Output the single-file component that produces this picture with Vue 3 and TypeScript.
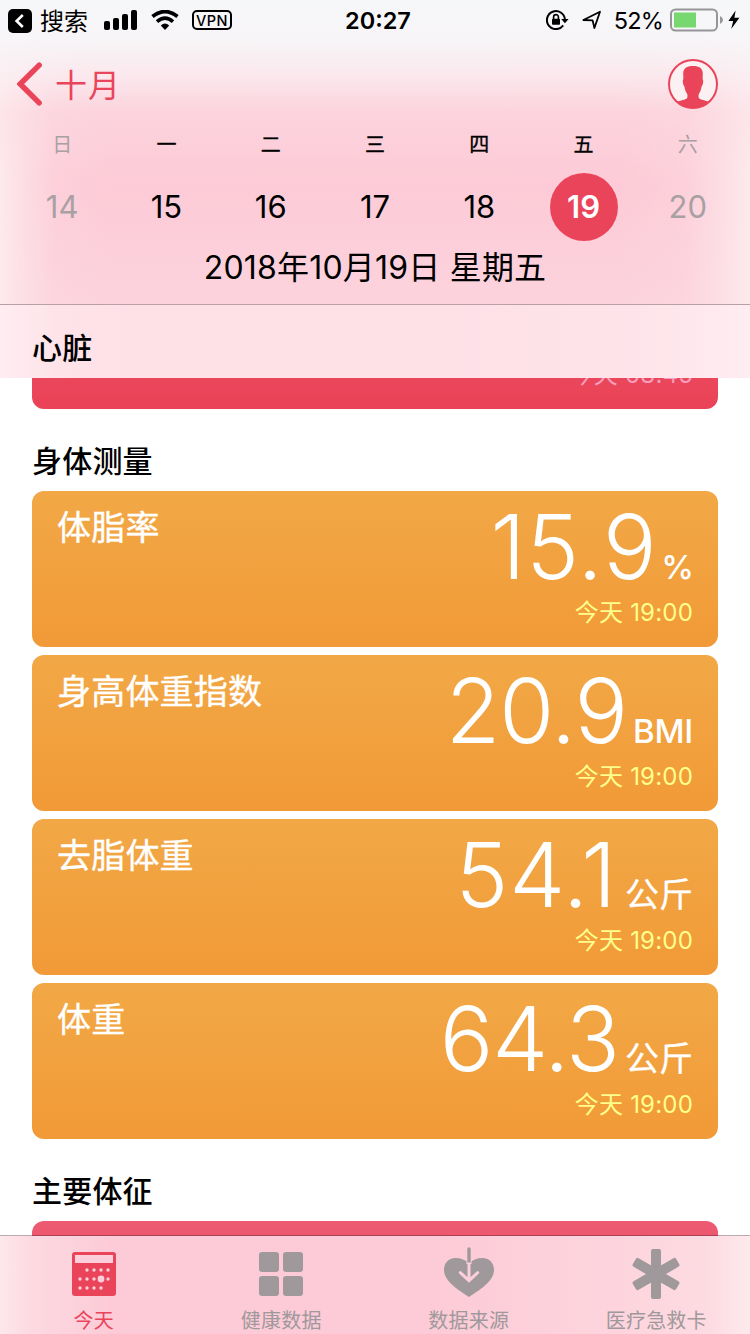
<script setup lang="ts">
interface Day {
  name: string
  date: number
  state: 'normal' | 'weekend' | 'active'
}

interface Metric {
  title: string
  value: string
  unit: string
  time: string
  kind: 'ratio' | 'latin' | 'cjk'
}

interface Tab {
  key: string
  label: string
}

const days: Day[] = [
  { name: '日', date: 14, state: 'weekend' },
  { name: '一', date: 15, state: 'normal' },
  { name: '二', date: 16, state: 'normal' },
  { name: '三', date: 17, state: 'normal' },
  { name: '四', date: 18, state: 'normal' },
  { name: '五', date: 19, state: 'active' },
  { name: '六', date: 20, state: 'weekend' },
]

const metrics: Metric[] = [
  { title: '体脂率', value: '15.9', unit: '%', time: '今天 19:00', kind: 'ratio' },
  { title: '身高体重指数', value: '20.9', unit: 'BMI', time: '今天 19:00', kind: 'latin' },
  { title: '去脂体重', value: '54.1', unit: '公斤', time: '今天 19:00', kind: 'cjk' },
  { title: '体重', value: '64.3', unit: '公斤', time: '今天 19:00', kind: 'cjk' },
]

const tabs: Tab[] = [
  { key: 'today', label: '今天' },
  { key: 'data', label: '健康数据' },
  { key: 'sources', label: '数据来源' },
  { key: 'medical', label: '医疗急救卡' },
]

const calendarDots: [number, number][] = [
  [15, 18], [22, 18], [29, 18], [36, 18],
  [8, 27], [15, 27], [22, 27], [36, 27],
  [8, 36], [15, 36], [22, 36], [29, 36],
]

// The digit 1 is much narrower than the others, so values with it get looser tracking.
const hasNarrowDigit = (value: string): boolean => value.includes('1')
</script>

<template>
  <div class="screen">
    <header class="header">
      <div class="status">
        <div class="status-left">
          <svg class="back-app" width="24" height="24" viewBox="0 0 24 24">
            <rect width="24" height="24" rx="5" fill="#000" />
            <path d="M14.8 6 L8.6 12 L14.8 18" fill="none" stroke="#fff" stroke-width="2.6" />
          </svg>
          <span class="back-label">搜索</span>
          <svg class="signal" width="34" height="20" viewBox="0 0 34 20">
            <rect x="0" y="11" width="6" height="9" rx="2" />
            <rect x="9" y="8" width="6" height="12" rx="2" />
            <rect x="18" y="4" width="6" height="16" rx="2" />
            <rect x="27" y="0" width="6" height="20" rx="2" />
          </svg>
          <svg class="wifi" width="28" height="20" viewBox="0 0 28 20">
            <path d="M1.5 6.6 Q14 -3.4 26.5 6.6" fill="none" stroke="#000" stroke-width="3.8" />
            <path d="M6 11.6 Q14 4.6 22 11.6" fill="none" stroke="#000" stroke-width="3.6" />
            <path d="M9.8 15.4 Q14 11.6 18.2 15.4 L14 20 Z" />
          </svg>
          <span class="vpn">VPN</span>
        </div>
        <span class="clock">20:27</span>
        <div class="status-right">
          <svg class="lock" width="23" height="20" viewBox="0 0 23 20">
            <path d="M17.2 15.4 A9 9 0 1 1 18.9 9.4" fill="none" stroke="#000" stroke-width="2" />
            <path d="M15.2 9 H22.6 L18.9 13.2 Z" />
            <rect x="6" y="8.8" width="8" height="6" rx="0.8" />
            <path d="M7.6 9 V7 A2.4 2.4 0 0 1 12.4 7 V9" fill="none" stroke="#000" stroke-width="1.6" />
          </svg>
          <svg class="location" width="20" height="20" viewBox="0 0 20 20">
            <path d="M1.4 10 L18 1.8 L12.4 18 L10.6 10.4 Z" fill="none" stroke="#000" stroke-width="1.8" stroke-linejoin="round" />
          </svg>
          <span class="charge">52%</span>
          <svg class="battery" width="54" height="24" viewBox="0 0 54 24">
            <rect x="1" y="1.500" width="46" height="21" rx="4.5" fill="none" stroke="#96969a" stroke-width="2" />
            <rect x="4" y="4.500" width="22" height="15" fill="#78d870" />
            <path d="M50 8.100 Q53 9.500 53 12 Q53 14.500 50 15.900 Z" fill="#96969a" />
          </svg>
          <svg class="bolt" width="12" height="20" viewBox="0 0 12 20">
            <path d="M7.6 0.5 L0.4 11 H5.2 L3.2 19 L11.4 7.8 H6.4 Z" />
          </svg>
        </div>
      </div>

      <div class="nav">
        <div class="nav-back">
          <svg width="26" height="44" viewBox="0 0 26 44">
            <path d="M22.2 3.2 L3.2 22 L22.2 40.8" fill="none" stroke="#ea445a" stroke-width="5.4" stroke-linecap="round" />
          </svg>
          <span>十月</span>
        </div>
        <svg class="avatar" width="50" height="50" viewBox="0 0 50 50">
          <circle cx="25" cy="25" r="24" fill="#fbf1f3" stroke="#ea445a" stroke-width="2" />
          <path
            d="M15.2 15 C15 9.5 18.5 7 25 7 C31.5 7 35 9.5 34.8 15 L34.6 20 C35.7 21 35.2 26 33.6 27.4 C33.2 31 31.6 33.5 30.6 35.5 V38.5 C31.5 40.8 35 40.6 40.5 42.5 L38 45 A24 24 0 0 1 12 45 L9.5 42.5 C15 40.6 18.5 40.8 19.4 38.5 V35.5 C18.4 33.5 16.8 31 16.4 27.4 C14.8 26 14.3 21 15.4 20 Z"
            fill="#ea445a"
          />
        </svg>
      </div>

      <div class="week">
        <div v-for="day in days" :key="day.date" class="day" :class="day.state">
          <span class="day-name">{{ day.name }}</span>
          <span class="day-date">{{ day.date }}</span>
        </div>
      </div>
      <div class="full-date">2018年10月19日 星期五</div>
    </header>

    <main class="content">
      <h2 class="section sticky">心脏</h2>
      <article class="card heart">
        <div class="reading">
          <span class="time">今天 08:45</span>
        </div>
      </article>

      <h2 class="section">身体测量</h2>
      <div class="cards">
        <article v-for="m in metrics" :key="m.title" class="card body">
          <h3 class="card-title">{{ m.title }}</h3>
          <div class="reading">
            <div class="amount">
              <span class="value" :class="{ loose: hasNarrowDigit(m.value) }">{{ m.value }}</span>
              <span class="unit" :class="m.kind">{{ m.unit }}</span>
            </div>
            <span class="time">{{ m.time }}</span>
          </div>
        </article>
      </div>

      <h2 class="section">主要体征</h2>
      <article class="card vitals"></article>
    </main>

    <nav class="tabbar">
      <div v-for="tab in tabs" :key="tab.key" class="tab" :class="{ selected: tab.key === 'today' }">
        <svg class="tab-icon" width="52" height="52" viewBox="0 0 52 52">
          <g v-if="tab.key === 'today'" transform="translate(4 5)">
            <rect width="44" height="44" rx="3" />
            <rect class="cut" x="3" y="3" width="38" height="8" />
            <circle v-for="([x, y], i) in calendarDots" :key="i" class="cut" :cx="x" :cy="y" r="1.7" />
            <circle class="cut" cx="29" cy="27" r="3.4" />
          </g>
          <g v-else-if="tab.key === 'data'" transform="translate(4 5)">
            <rect width="20" height="20" rx="3" />
            <rect x="24" width="20" height="20" rx="3" />
            <rect y="24" width="20" height="20" rx="3" />
            <rect x="24" y="24" width="20" height="20" rx="3" />
          </g>
          <g v-else-if="tab.key === 'sources'">
            <path d="M26 50 C21 46 1 36 1 23 C1 15 6.5 11 12.5 11 C18 11 22.5 13 26 16 C29.5 13 34 11 39.5 11 C45.5 11 51 15 51 23 C51 36 31 46 26 50 Z" />
            <path class="cut-line" d="M26 15 V33 M17.3 25.6 L26 33.7 L34.7 25.6" stroke-width="3" stroke-linecap="round" />
            <path class="cut-line" d="M26 12 V17" stroke-width="5" />
            <path d="M24.3 1.7 Q26 -1 27.7 1.7 V15.5 H24.3 Z" />
          </g>
          <g v-else>
            <rect x="21" y="2" width="10" height="50" rx="2" />
            <rect x="21" y="2" width="10" height="50" rx="2" transform="rotate(60 26 27)" />
            <rect x="21" y="2" width="10" height="50" rx="2" transform="rotate(-60 26 27)" />
          </g>
        </svg>
        <span class="tab-label">{{ tab.label }}</span>
      </div>
    </nav>
  </div>
</template>

<style>
body {
  margin: 0;
  background: #fff;
}
</style>

<style scoped>
.screen {
  display: flex;
  flex-direction: column;
  width: 750px;
  height: 1334px;
  overflow: hidden;
  background: #fff;
  color: #000;
  font-family: Inter, "Noto Sans CJK SC", sans-serif;
}

h2,
h3 {
  margin: 0;
}

svg {
  display: block;
  flex: none;
}

.header {
  flex: none;
  box-sizing: border-box;
  height: 305px;
  border-bottom: 1px solid #b9a0a6;
  background:
    linear-gradient(to bottom, #f6f7f9 0, rgba(247, 246, 248, 0.96) 40px, rgba(250, 240, 243, 0.78) 75px, rgba(253, 222, 229, 0.4) 112px, rgba(253, 214, 223, 0) 180px),
    linear-gradient(to right, #fdeaed 0, rgba(253, 228, 233, 0.8) 20px, rgba(253, 216, 224, 0.35) 55px, rgba(252, 208, 219, 0) 110px),
    linear-gradient(to left, #fdeaed 0, rgba(253, 228, 233, 0.8) 24px, rgba(253, 216, 224, 0.4) 65px, rgba(252, 208, 219, 0) 130px),
    linear-gradient(to bottom, #fccdd8 0, #fccbd7 190px, #fcd3dd 304px);
}

.status {
  display: grid;
  grid-template-columns: 1fr auto 1fr;
  align-items: center;
  height: 40px;
  padding: 0 10px 0 8px;
}

.status-left,
.status-right {
  display: flex;
  align-items: center;
  height: 40px;
}

.status-right {
  justify-content: flex-end;
}

.back-app {
  margin-top: 2px;
}

.back-label {
  margin-left: 8px;
  padding-top: 4px;
  font-size: 24px;
  line-height: 36px;
}

.signal {
  margin-left: 16px;
}

.wifi {
  margin-left: 13px;
}

.vpn {
  box-sizing: border-box;
  width: 40px;
  height: 20px;
  margin-left: 13px;
  border: 2px solid #000;
  border-radius: 5px;
  font-size: 14.5px;
  font-weight: 500;
  line-height: 17px;
  letter-spacing: 0.4px;
  text-align: center;
}

.clock {
  margin-left: 8px;
  padding-top: 2px;
  font-size: 23.5px;
  font-weight: 600;
  line-height: 38px;
}

.charge {
  margin-left: 12px;
  padding-top: 2px;
  font-size: 23.5px;
  line-height: 38px;
  letter-spacing: -0.8px;
}

.location {
  margin-left: 13px;
}

.battery {
  margin-left: 7px;
}

.bolt {
  margin-left: 4px;
}

.nav {
  display: flex;
  align-items: center;
  justify-content: space-between;
  height: 50px;
  margin-top: 19px;
  padding: 0 32px 0 17px;
}

.nav-back {
  display: flex;
  align-items: center;
  gap: 12px;
  color: #ea445a;
  font-size: 32px;
  line-height: 46px;
  letter-spacing: 1px;
}

.nav-back span {
  padding-top: 4px;
}

.week {
  display: grid;
  grid-template-columns: repeat(7, 1fr);
  padding: 0 10px;
  margin-top: 20px;
}

.day {
  display: flex;
  flex-direction: column;
  align-items: center;
}

.day-name {
  font-size: 20px;
  line-height: 32px;
  -webkit-text-stroke: 0.3px currentColor;
}

.day-date {
  width: 68px;
  height: 68px;
  margin-top: 12px;
  border-radius: 50%;
  font-size: 31px;
  line-height: 68px;
  text-align: center;
}

.weekend {
  color: #a9a0a3;
}

.weekend .day-name {
  -webkit-text-stroke: 0;
}

.active .day-date {
  background: #ea445a;
  color: #fff;
  font-weight: 600;
}

.full-date {
  margin-top: 5px;
  font-size: 32px;
  line-height: 44px;
  text-align: center;
  letter-spacing: 0.2px;
}

.content {
  display: flex;
  flex: 1;
  flex-direction: column;
  min-height: 0;
  overflow: hidden;
}

.section {
  flex: none;
  box-sizing: border-box;
  height: 82px;
  padding: 22px 32px 0;
  font-size: 30px;
  font-weight: 500;
  line-height: 60px;
  letter-spacing: 0.2px;
}

.sticky {
  position: relative;
  z-index: 1;
  height: 73px;
  padding-top: 13px;
  background: linear-gradient(to right, #ffedf1 0, #fee3e9 60px, #fee0e7 160px, #fee0e7 420px, #fee4ea 640px, #ffedf1 750px);
}

.card {
  display: flex;
  flex: none;
  justify-content: space-between;
  box-sizing: border-box;
  height: 156px;
  margin: 0 32px;
  padding: 4px 25px 0;
  border-radius: 12px;
}

.cards {
  display: flex;
  flex: none;
  flex-direction: column;
  gap: 8px;
}

.body {
  background: linear-gradient(to bottom, #f2a846, #f19a37);
  color: #fff;
}

.heart {
  justify-content: flex-end;
  margin-top: -125px;
  background: linear-gradient(to bottom, #ed5a71, #ea4256);
}

.heart .reading {
  padding-top: 104px;
}

.heart .time {
  color: #f79dbd;
}

.vitals {
  background: linear-gradient(to bottom, #ed5a71, #ea4256);
}

.card-title {
  font-size: 34px;
  font-weight: 400;
  line-height: 66px;
  letter-spacing: 0.2px;
  -webkit-text-stroke: 0.4px currentColor;
}

.reading {
  display: flex;
  flex-direction: column;
  align-items: flex-end;
}

.amount {
  display: flex;
  align-items: baseline;
  height: 104px;
}

.value {
  font-size: 89px;
  font-weight: 300;
  line-height: 104px;
  letter-spacing: -1px;
}

.value.loose {
  margin-right: 2px;
  letter-spacing: 0.8px;
}

.unit {
  margin-left: 6px;
  font-size: 33px;
  font-weight: 500;
  line-height: 40px;
  letter-spacing: -0.3px;
}

.unit.ratio {
  margin: 0 -1px 0 2px;
  letter-spacing: 0;
}

.unit.cjk {
  font-size: 34px;
  font-weight: 400;
  letter-spacing: 0;
  -webkit-text-stroke: 0.3px currentColor;
}

.time {
  color: #ffff8c;
  font-size: 24px;
  line-height: 28px;
  letter-spacing: 0.2px;
}

.tabbar {
  position: relative;
  display: grid;
  flex: none;
  grid-template-columns: repeat(4, 1fr);
  height: 98px;
  box-shadow: 0 -1px 0 rgba(60, 20, 40, 0.36);
  background:
    linear-gradient(to right, #fde8eb 0, rgba(253, 224, 229, 0.7) 30px, rgba(252, 204, 216, 0) 110px),
    linear-gradient(to left, #fdeaed 0, rgba(253, 224, 229, 0.6) 40px, rgba(252, 212, 222, 0) 130px),
    linear-gradient(to right, #fccbd7 0, #fccbd7 440px, #fdd4dd 600px, #fdd4dd 750px);
}

.tab {
  display: flex;
  flex-direction: column;
  align-items: center;
  padding-top: 11px;
  color: #9f999b;
  fill: #9f999b;
}

.tab.selected {
  color: #ea445a;
  fill: #ea445a;
}

.cut {
  fill: #fccfda;
}

.cut-line {
  fill: none;
  stroke: #fccfda;
}

.tab-label {
  margin-top: 7px;
  font-size: 20px;
  line-height: 30px;
  letter-spacing: 0.2px;
}
</style>
